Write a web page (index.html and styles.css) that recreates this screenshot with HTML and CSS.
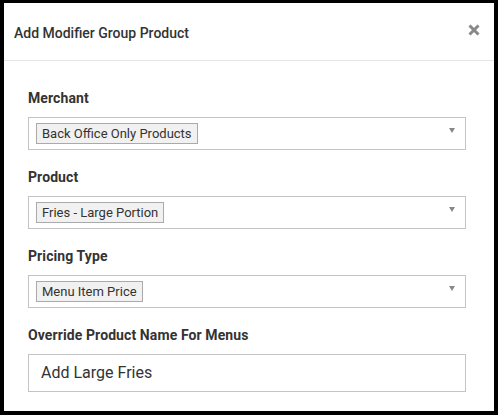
FILE: index.html
```html
<!DOCTYPE html>
<html>
<head>
<meta charset="utf-8">
<link rel="stylesheet" href="styles.css">
</head>
<body>
<div class="modal">
  <div class="modal-header">
    <h1 class="modal-title">Add Modifier Group Product</h1>
    <span class="close" aria-label="Close">
      <svg width="12" height="12" viewBox="0 0 12 12"><path d="M1.5 1.5 L10.5 10.5 M10.5 1.5 L1.5 10.5" stroke="#888" stroke-width="3" stroke-linecap="butt"/></svg>
    </span>
  </div>
  <div class="modal-body">
    <div class="field">
      <label class="label">Merchant</label>
      <div class="select"><span class="tag">Back Office Only Products</span><span class="arrow"></span></div>
    </div>
    <div class="field">
      <label class="label">Product</label>
      <div class="select"><span class="tag">Fries - Large Portion</span><span class="arrow"></span></div>
    </div>
    <div class="field">
      <label class="label">Pricing Type</label>
      <div class="select"><span class="tag">Menu Item Price</span><span class="arrow"></span></div>
    </div>
    <div class="field">
      <label class="label">Override Product Name For Menus</label>
      <div class="input">Add Large Fries</div>
    </div>
  </div>
</div>
</body>
</html>
```
FILE: styles.css
```css
html, body {
  margin: 0;
  padding: 0;
  background: #000;
  font-family: Roboto, "Liberation Sans", Arial, sans-serif;
}
.modal {
  margin: 3px 4px 4px 4px;
  height: 408px;
  background: #fff;
  overflow: hidden;
}
.modal-header {
  display: flex;
  align-items: flex-start;
  justify-content: space-between;
  padding: 20px 14px 16px 10px;
  height: 21px;
  border-bottom: 1px solid #e6e6e6;
}
.modal-title {
  margin: 0;
  font-size: 14px;
  line-height: 20px;
  font-weight: 500;
  color: #333;
}
.close {
  display: flex;
  margin-top: 1px;
}
.modal-body {
  padding: 27px 28px 0 24px;
}
.field {
  margin-bottom: 17px;
}
.label {
  display: block;
  font-size: 14px;
  line-height: 20px;
  font-weight: 700;
  color: #333;
  letter-spacing: 0.1px;
  margin-bottom: 9px;
}
.select {
  position: relative;
  box-sizing: border-box;
  height: 33px;
  border: 1px solid #c4c4c4;
  padding: 5px 7px 0 7px;
  display: flex;
  align-items: flex-start;
}
.tag {
  box-sizing: border-box;
  height: 21px;
  border: 1px solid #aaa;
  background: #f1f1f1;
  color: #333;
  font-size: 13px;
  line-height: 19px;
  padding: 0 5px;
}
.arrow {
  position: absolute;
  right: 10px;
  top: 10px;
  width: 0;
  height: 0;
  border-left: 3.5px solid transparent;
  border-right: 3.5px solid transparent;
  border-top: 5px solid #888;
}
.input {
  box-sizing: border-box;
  height: 38px;
  border: 1px solid #c4c4c4;
  padding: 0 12px;
  font-size: 16px;
  line-height: 36px;
  color: #333;
}
```
